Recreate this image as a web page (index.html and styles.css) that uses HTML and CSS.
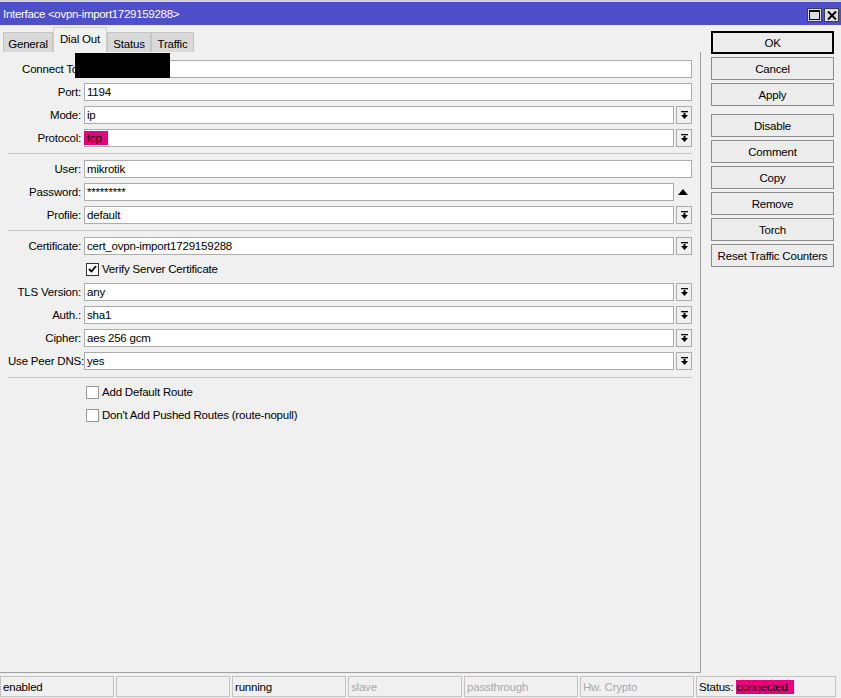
FILE: index.html
```html
<!DOCTYPE html>
<html>
<head>
<meta charset="utf-8">
<link rel="stylesheet" href="styles.css">
</head>
<body>
<div class="win">
  <div class="titlebar">
    <span class="title">Interface &lt;ovpn-import1729159288&gt;</span>
    <div class="tbtns">
      <span class="tbtn"><svg width="11" height="10" viewBox="0 0 11 10"><rect x="0.5" y="0.5" width="10" height="9" fill="none" stroke="#000"/><rect x="0" y="0" width="11" height="2" fill="#000"/></svg></span>
      <span class="tbtn"><svg width="10" height="9" viewBox="0 0 10 9"><path d="M1 0.5 L9 8.5 M9 0.5 L1 8.5" stroke="#000" stroke-width="2"/></svg></span>
    </div>
  </div>
  <div class="main">
    <div class="left">
      <div class="tabs">
        <div class="tab t-general">General</div>
        <div class="tab active t-dial">Dial Out</div>
        <div class="tab t-status">Status</div>
        <div class="tab t-traffic">Traffic</div>
      </div>
      <div class="panel">
        <div class="redact"></div>
        <div class="row"><label>Connect To:</label><div class="field"></div></div>
        <div class="row"><label>Port:</label><div class="field">1194</div></div>
        <div class="row"><label>Mode:</label><div class="field">ip</div><span class="dd"><svg width="7" height="8" viewBox="0 0 7 8"><rect x="0" y="0" width="7" height="1.3" fill="#000"/><path d="M2.5 2 H4.5 V4 H7 L3.5 8 L0 4 H2.5 Z" fill="#000"/></svg></span></div>
        <div class="row"><label>Protocol:</label><div class="field"><span class="hl">tcp</span></div><span class="dd"><svg width="7" height="8" viewBox="0 0 7 8"><rect x="0" y="0" width="7" height="1.3" fill="#000"/><path d="M2.5 2 H4.5 V4 H7 L3.5 8 L0 4 H2.5 Z" fill="#000"/></svg></span></div>
        <div class="sep"></div>
        <div class="row"><label>User:</label><div class="field">mikrotik</div></div>
        <div class="row"><label>Password:</label><div class="field pw">*********</div><span class="up"><svg width="10" height="6" viewBox="0 0 10 6"><path d="M0 6 L5 0 L10 6 Z" fill="#000"/></svg></span></div>
        <div class="row"><label>Profile:</label><div class="field">default</div><span class="dd"><svg width="7" height="8" viewBox="0 0 7 8"><rect x="0" y="0" width="7" height="1.3" fill="#000"/><path d="M2.5 2 H4.5 V4 H7 L3.5 8 L0 4 H2.5 Z" fill="#000"/></svg></span></div>
        <div class="sep"></div>
        <div class="row"><label>Certificate:</label><div class="field">cert_ovpn-import1729159288</div><span class="dd"><svg width="7" height="8" viewBox="0 0 7 8"><rect x="0" y="0" width="7" height="1.3" fill="#000"/><path d="M2.5 2 H4.5 V4 H7 L3.5 8 L0 4 H2.5 Z" fill="#000"/></svg></span></div>
        <div class="row check"><span class="cb on"><svg width="9" height="8" viewBox="0 0 9 8"><path d="M1 4 L3.5 6.5 L8 1" fill="none" stroke="#000" stroke-width="1.8"/></svg></span><span>Verify Server Certificate</span></div>
        <div class="row"><label>TLS Version:</label><div class="field">any</div><span class="dd"><svg width="7" height="8" viewBox="0 0 7 8"><rect x="0" y="0" width="7" height="1.3" fill="#000"/><path d="M2.5 2 H4.5 V4 H7 L3.5 8 L0 4 H2.5 Z" fill="#000"/></svg></span></div>
        <div class="row"><label>Auth.:</label><div class="field">sha1</div><span class="dd"><svg width="7" height="8" viewBox="0 0 7 8"><rect x="0" y="0" width="7" height="1.3" fill="#000"/><path d="M2.5 2 H4.5 V4 H7 L3.5 8 L0 4 H2.5 Z" fill="#000"/></svg></span></div>
        <div class="row"><label>Cipher:</label><div class="field">aes 256 gcm</div><span class="dd"><svg width="7" height="8" viewBox="0 0 7 8"><rect x="0" y="0" width="7" height="1.3" fill="#000"/><path d="M2.5 2 H4.5 V4 H7 L3.5 8 L0 4 H2.5 Z" fill="#000"/></svg></span></div>
        <div class="row"><label>Use Peer DNS:</label><div class="field">yes</div><span class="dd"><svg width="7" height="8" viewBox="0 0 7 8"><rect x="0" y="0" width="7" height="1.3" fill="#000"/><path d="M2.5 2 H4.5 V4 H7 L3.5 8 L0 4 H2.5 Z" fill="#000"/></svg></span></div>
        <div class="sep sep-last"></div>
        <div class="row check"><span class="cb"></span><span>Add Default Route</span></div>
        <div class="row check"><span class="cb"></span><span>Don't Add Pushed Routes (route-nopull)</span></div>
      </div>
    </div>
    <div class="right">
      <div class="btn default">OK</div>
      <div class="btn">Cancel</div>
      <div class="btn">Apply</div>
      <div class="btn group">Disable</div>
      <div class="btn">Comment</div>
      <div class="btn">Copy</div>
      <div class="btn">Remove</div>
      <div class="btn">Torch</div>
      <div class="btn">Reset Traffic Counters</div>
    </div>
  </div>
  <div class="statusbar">
    <div class="cell">enabled</div>
    <div class="cell"></div>
    <div class="cell">running</div>
    <div class="cell dis">slave</div>
    <div class="cell dis">passthrough</div>
    <div class="cell dis">Hw. Crypto</div>
    <div class="cell">Status: <span class="hl2">connected</span></div>
  </div>
</div>
</body>
</html>
```

FILE: styles.css
```css
* { box-sizing: border-box; }
html, body { margin: 0; padding: 0; }
body {
  background: #f0f0f0;
  font-family: "Liberation Sans", Arial, sans-serif;
  font-size: 11px;
  letter-spacing: -0.2px;
  color: #000;
}
.win {
  width: 841px;
  height: 698px;
  display: flex;
  flex-direction: column;
  background: #f0f0f0;
}
.titlebar {
  height: 25px;
  border-top: 2px solid #d4d4d4;
  background: #4f4fc9;
  display: flex;
  align-items: center;
  justify-content: space-between;
  padding: 0 2px 0 3px;
}
.title { color: #fff; font-size: 11.5px; letter-spacing: -0.3px; }
.tbtns { display: flex; gap: 2px; margin-top: 3px; }
.tbtn {
  width: 15px;
  height: 14px;
  background: #dcdcdc;
  border: 1px solid #3c3c3c;
  display: flex;
  align-items: center;
  justify-content: center;
}
.main {
  height: 648px;
  display: flex;
}
.left {
  width: 701px;
  display: flex;
  flex-direction: column;
}
.tabs {
  margin-top: 2px;
  height: 25px;
  display: flex;
  align-items: flex-end;
  padding-left: 3px;
}
.tab {
  height: 20px;
  background: #d9d9d9;
  border: 1px solid #c4c4c4;
  border-bottom: none;
  display: flex;
  align-items: center;
  justify-content: center;
  font-size: 11.5px;
}
.tab.active {
  height: 25px;
  background: #f0f0f0;
  border-color: #d0d0d0;
  padding-bottom: 2px;
}
.t-general { width: 50px; padding-top: 2px; }
.t-dial { width: 54px; }
.t-status { width: 44px; padding-top: 2px; }
.t-traffic { width: 43px; padding-top: 2px; }
.panel {
  position: relative;
  flex: 1;
  display: flex;
  flex-direction: column;
  border-right: 1px solid #a0a0a0;
  border-bottom: 1px solid #a0a0a0;
  padding: 8px 8px 0 8px;
}
.redact {
  position: absolute;
  left: 75px;
  top: 1px;
  width: 95px;
  height: 25px;
  background: #000;
}
.row {
  height: 18px;
  flex-shrink: 0;
  margin-bottom: 5px;
  display: flex;
  align-items: center;
}
.row label {
  width: 73px;
  flex-shrink: 0;
  text-align: right;
  margin-right: 3px;
  white-space: nowrap;
  font-size: 11.5px;
}
.field {
  flex: 1;
  height: 18px;
  background: #fff;
  border: 1px solid #acacac;
  padding: 0 2px;
  line-height: 16px;
  font-size: 11.5px;
  white-space: nowrap;
}
.dd {
  width: 16px;
  height: 18px;
  margin-left: 2px;
  border: 1px solid #acacac;
  background: #f0f0f0;
  display: flex;
  align-items: center;
  justify-content: center;
}
.up {
  width: 18px;
  height: 18px;
  display: flex;
  align-items: center;
  justify-content: center;
}
.hl {
  background: #e5007d;
  margin-left: -3px;
  padding: 1px 6px 1px 3px;
}
.sep {
  height: 1px;
  flex-shrink: 0;
  background: #c9c9c9;
  margin: 1px 0 6px 0;
}
.sep.sep-last { margin: 2px 0 5px 0; }
.check { padding-left: 78px; font-size: 11.5px; }
.cb {
  width: 13px;
  height: 13px;
  background: #fff;
  border: 1px solid #9a9a9a;
  margin-right: 3px;
  display: flex;
  align-items: center;
  justify-content: center;
}
.cb.on { border-color: #333; }
.right {
  flex: 1;
  padding: 6px 0 0 10px;
}
.btn {
  width: 123px;
  height: 23px;
  margin-bottom: 3px;
  border: 1px solid #8c8c8c;
  background: #ececec;
  display: flex;
  align-items: center;
  justify-content: center;
  font-size: 11.5px;
}
.btn.default { border: 2px solid #000; }
.btn.group { margin-top: 8px; }
.statusbar {
  height: 25px;
  padding-top: 3px;
  display: grid;
  grid-template-columns: repeat(6, 114px) 140px;
  column-gap: 2px;
}
.cell {
  height: 21px;
  border: 1px solid #c4c4c4;
  padding: 0 2px;
  display: flex;
  align-items: center;
  white-space: nowrap;
  font-size: 11.5px;
}
.cell.dis { color: #a8a8a8; }
.hl2 { background: #e5007d; margin-left: 3px; padding: 1px 6px 1px 0; }
```
